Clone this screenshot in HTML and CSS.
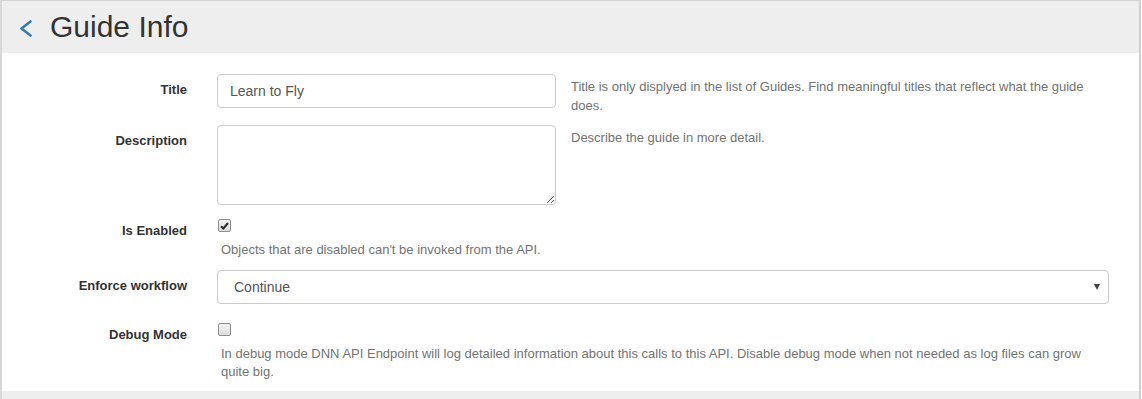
FILE: index.html
```html
<!DOCTYPE html>
<html lang="en">
<head>
    <meta charset="UTF-8">
    <title>Guide Info</title>
    <link rel="stylesheet" href="styles.css">
</head>
<body>
    <div class="panel">
        <div class="panel-heading">
            <a class="back-link" href="#">
                <svg width="14" height="17" viewBox="0 0 14 17">
                    <polyline points="11.5,1.5 2.5,8.5 11.5,15.5" fill="none" stroke="#337ab7" stroke-width="2.6" stroke-linecap="round" stroke-linejoin="round"/>
                </svg>
            </a>
            <h2>Guide Info</h2>
        </div>

        <div class="panel-body">
            <!-- Title -->
            <div class="form-row">
                <label class="form-label" for="title">Title</label>
                <div class="form-field">
                    <input class="form-control" id="title" type="text" value="Learn to Fly">
                    <p class="help-text">Title is only displyed in the list of Guides. Find meaningful titles that reflect what the guide does.</p>
                </div>
            </div>

            <!-- Description -->
            <div class="form-row">
                <label class="form-label" for="description">Description</label>
                <div class="form-field">
                    <textarea class="form-control textarea" id="description"></textarea>
                    <p class="help-text help-single">Describe the guide in more detail.</p>
                </div>
            </div>

            <!-- Is Enabled -->
            <div class="form-row">
                <label class="form-label">Is Enabled</label>
                <div class="form-field stacked">
                    <span class="check-box">
                        <svg width="9" height="8" viewBox="0 0 9 8">
                            <polyline points="1,4.2 3.4,6.5 8,1" fill="none" stroke="#2b2b2b" stroke-width="2"/>
                        </svg>
                    </span>
                    <p class="help-text help-below">Objects that are disabled can't be invoked from the API.</p>
                </div>
            </div>

            <!-- Enforce workflow -->
            <div class="form-row form-row-select">
                <label class="form-label" for="workflow">Enforce workflow</label>
                <div class="form-field">
                    <div class="select-wrap">
                        <select class="form-control select" id="workflow">
                            <option>Continue</option>
                        </select>
                    </div>
                </div>
            </div>

            <!-- Debug Mode -->
            <div class="form-row">
                <label class="form-label">Debug Mode</label>
                <div class="form-field stacked">
                    <span class="check-box"></span>
                    <p class="help-text help-below">In debug mode DNN API Endpoint will log detailed information about this calls to this API. Disable debug mode when not needed as log files can grow quite big.</p>
                </div>
            </div>
        </div>

        <div class="panel-footer"></div>
    </div>
</body>
</html>
```

FILE: styles.css
```css
/* Base Styles */
* {
    margin: 0;
    padding: 0;
    box-sizing: border-box;
}

body {
    font-family: 'Liberation Sans', Arial, sans-serif;
    background-color: #fff;
    color: #333;
}

/* Panel */
.panel {
    width: 1141px;
    border-top: 1px solid #d4d4d4;
    border-left: 2px solid #d8d8d8;
    border-right: 2px solid #d0d0d0;
}

.panel-heading {
    display: flex;
    align-items: center;
    height: 52px;
    padding-left: 17px;
    background-color: #eee;
}

.back-link {
    display: flex;
    margin-top: 3px;
    margin-right: 17px;
}

.panel-heading h2 {
    font-size: 30px;
    font-weight: 400;
    color: #333;
}

.panel-body {
    padding: 21px 30px 9px 30px;
}

.panel-footer {
    height: 20px;
    background-color: #eee;
}

/* Form rows */
.form-row {
    display: flex;
    margin-bottom: 10px;
}

.form-row-select {
    margin-bottom: 15px;
}

.form-row:last-child {
    margin-bottom: 0;
}

.form-label {
    width: 155px;
    flex-shrink: 0;
    margin-right: 30px;
    padding-top: 7px;
    text-align: right;
    font-size: 13px;
    font-weight: 700;
    line-height: 17px;
    color: #333;
}

.form-field {
    flex: 1;
    display: flex;
    gap: 15px;
}

.form-field.stacked {
    flex-direction: column;
    gap: 0;
}

.form-control {
    display: block;
    width: 339px;
    height: 34px;
    padding: 6px 12px;
    border: 1px solid #ccc;
    border-radius: 4px;
    background-color: #fff;
    font-family: 'Liberation Sans', Arial, sans-serif;
    font-size: 14px;
    color: #555;
    flex-shrink: 0;
}

.textarea {
    height: 80px;
    resize: vertical;
}

.select-wrap {
    position: relative;
    width: 100%;
}

.select-wrap::after {
    content: "";
    position: absolute;
    right: 9px;
    top: 14px;
    border-left: 3.5px solid transparent;
    border-right: 3.5px solid transparent;
    border-top: 6px solid #444;
}

.select {
    width: 100%;
    padding-left: 16px;
    appearance: none;
    -webkit-appearance: none;
}

/* Help text */
.help-text {
    flex: 1;
    margin-top: 4px;
    font-size: 13px;
    line-height: 1.428571;
    color: #737373;
}

.help-single {
    margin-top: 4px;
}

.help-below {
    margin-top: 9px;
    margin-left: 4px;
}

/* Checkboxes */
.check-box {
    display: flex;
    align-items: center;
    justify-content: center;
    width: 13px;
    height: 13px;
    margin-top: 4px;
    margin-left: 1px;
    border: 1px solid #8e8e8e;
    border-radius: 2px;
    background: linear-gradient(#f2f2f2, #dcdcdc);
}
```
